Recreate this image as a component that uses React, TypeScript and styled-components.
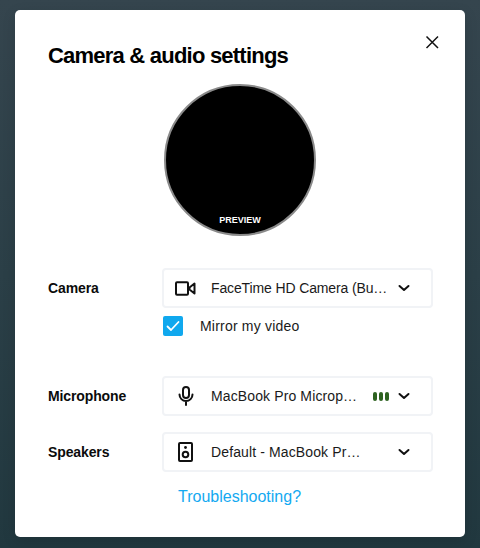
import React from "react";
import styled, { createGlobalStyle } from "styled-components";

const Global = createGlobalStyle`
  html, body { margin: 0; padding: 0; }
  body { font-family: "Liberation Sans", Arial, sans-serif; }
`;

const Backdrop = styled.div`
  width: 480px;
  height: 548px;
  box-sizing: border-box;
  padding: 10px 15px 11px;
  overflow: hidden;
  background: linear-gradient(180deg, #35454e 0%, #2b3f47 50%, #21383f 100%);
`;

const Card = styled.div`
  position: relative;
  height: 527px;
  box-sizing: border-box;
  padding: 32px 32px 0 33px;
  background: #fff;
  border-radius: 5px;
  box-shadow: 0 4px 14px rgba(0, 0, 0, 0.12);
`;

const Title = styled.h1`
  margin: 0;
  font-size: 22px;
  line-height: 28px;
  font-weight: 700;
  letter-spacing: -0.78px;
  color: #000;
`;

const Close = styled.button`
  position: absolute;
  top: 24px;
  right: 25px;
  width: 16px;
  height: 16px;
  padding: 0;
  border: 0;
  background: none;
  display: flex;
`;

const Preview = styled.div`
  width: 152px;
  height: 152px;
  box-sizing: border-box;
  margin: 14px 0 32px 116px;
  display: flex;
  align-items: flex-end;
  justify-content: center;
  padding-bottom: 8px;
  border-radius: 50%;
  background: #000;
  border: 2px solid #8a8a8a;
  color: #fff;
  font-size: 9px;
  line-height: 11px;
  font-weight: 700;
`;

const Row = styled.div<{ $gap: number }>`
  display: grid;
  grid-template-columns: 114px 271px;
  align-items: start;
  margin-bottom: ${(p) => p.$gap}px;
`;

const Label = styled.div`
  font-size: 14px;
  line-height: 40px;
  font-weight: 700;
  letter-spacing: -0.12px;
  color: #0b0b0b;
`;

const Select = styled.div`
  height: 40px;
  box-sizing: border-box;
  display: flex;
  align-items: center;
  padding: 0 20px 0 10px;
  border: 2px solid #f1f3f6;
  border-radius: 4px;
  background: #fff;
`;

const IconSlot = styled.span`
  width: 23px;
  height: 22px;
  flex: none;
  margin-right: 14px;
  display: flex;
  align-items: center;
  justify-content: center;
`;

const Value = styled.span<{ $tracking: number }>`
  flex: 1;
  min-width: 0;
  white-space: nowrap;
  font-size: 14px;
  line-height: 18px;
  letter-spacing: ${(p) => p.$tracking}px;
  color: #1a1a1a;
`;

const Level = styled.span`
  flex: none;
  display: flex;
  gap: 2px;
  margin-right: 8px;
`;

const LevelBar = styled.i`
  display: block;
  width: 4px;
  height: 9px;
  border-radius: 2px;
  background: #2e6220;
`;

const Chevron = styled.svg`
  flex: none;
  width: 14px;
  height: 14px;
`;

const CheckRow = styled.div`
  display: flex;
  align-items: center;
  gap: 17px;
  margin: 8px 0 0 1px;
  font-size: 14px;
  letter-spacing: 0.2px;
  color: #1a1a1a;
`;

const Checkbox = styled.span`
  width: 20px;
  height: 20px;
  border-radius: 2px;
  background: #10a8ee;
  display: flex;
  align-items: center;
  justify-content: center;
`;

const Help = styled.a`
  display: block;
  margin: 16px 0 0 130px;
  width: 123px;
  font-size: 16px;
  line-height: 18px;
  color: #13a9f1;
  white-space: nowrap;
`;

const Caret = () => (
  <Chevron viewBox="0 0 14 14" fill="none" stroke="#111" strokeWidth="2" strokeLinecap="round" strokeLinejoin="round">
    <path d="M2.5 5l4.5 4 4.5-4" />
  </Chevron>
);

export default function App() {
  return (
    <Backdrop>
      <Global />
      <Card>
        <Title>Camera &amp; audio settings</Title>
        <Close aria-label="Close">
          <svg width="16" height="16" viewBox="0 0 16 16" fill="none" stroke="#111" strokeWidth="1.5">
            <path d="M2.5 2.5l11.5 11.5M14 2.5L2.5 14" />
          </svg>
        </Close>
        <Preview>PREVIEW</Preview>
        <Row $gap={40}>
          <Label>Camera</Label>
          <div>
            <Select>
              <IconSlot>
                <svg width="21" height="15" viewBox="0 0 21 15" fill="none" stroke="#111" strokeWidth="2" strokeLinejoin="round">
                  <rect x="1" y="1.2" width="12" height="12.6" rx="1" />
                  <path d="M14.5 6.5l5-4v10l-5-4z" />
                </svg>
              </IconSlot>
              <Value $tracking={-0.13}>FaceTime HD Camera (Bu…</Value>
              <Caret />
            </Select>
            <CheckRow>
              <Checkbox>
                <svg width="14" height="12" viewBox="0 0 14 12" fill="none" stroke="#fff" strokeWidth="1.8" strokeLinecap="round" strokeLinejoin="round">
                  <path d="M1.5 6.5l3.5 3.5 7.5-8" />
                </svg>
              </Checkbox>
              Mirror my video
            </CheckRow>
          </div>
        </Row>
        <Row $gap={16}>
          <Label>Microphone</Label>
          <Select>
            <IconSlot>
              <svg width="16" height="20" viewBox="0 0 16 20" fill="none" stroke="#111" strokeWidth="2" strokeLinecap="round">
                <rect x="5" y="1" width="6" height="11" rx="3" />
                <path d="M1.5 8.5a6.5 6.5 0 0 0 13 0M8 15v4" />
              </svg>
            </IconSlot>
            <Value $tracking={0.12}>MacBook Pro Microp…</Value>
            <Level>
              <LevelBar />
              <LevelBar />
              <LevelBar />
            </Level>
            <Caret />
          </Select>
        </Row>
        <Row $gap={0}>
          <Label>Speakers</Label>
          <Select>
            <IconSlot>
              <svg width="15" height="20" viewBox="0 0 15 20" fill="none" stroke="#111" strokeWidth="2">
                <rect x="1" y="1" width="13" height="18" rx="1" />
                <circle cx="7.5" cy="12.5" r="2.8" />
                <circle cx="7.5" cy="5.5" r="1.4" fill="#111" stroke="none" />
              </svg>
            </IconSlot>
            <Value $tracking={0.12}>Default - MacBook Pr…</Value>
            <Caret />
          </Select>
        </Row>
        <Help>Troubleshooting?</Help>
      </Card>
    </Backdrop>
  );
}
